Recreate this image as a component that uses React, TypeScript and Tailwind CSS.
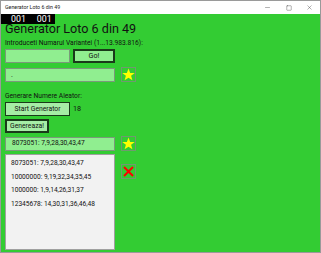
import { Minus, Square, X } from 'lucide-react';

const FONT = { fontFamily: 'Roboto, "Open Sans", sans-serif' };

const LIST = [
  '8073051: 7,9,28,30,43,47',
  '10000000: 9,19,32,34,35,45',
  '1000000: 1,9,14,26,31,37',
  '12345678: 14,30,31,36,46,48',
];

function Star() {
  return (
    <div className="w-[15px] h-[15px] border border-[#6f9a6f] flex items-center justify-center">
      <svg width="13" height="13" viewBox="0 0 24 24">
        <polygon points="12,1 15,9 23.5,9.2 16.8,14.4 19.2,22.8 12,17.8 4.8,22.8 7.2,14.4 0.5,9.2 9,9" fill="#ffff00" />
      </svg>
    </div>
  );
}

function Cross() {
  return (
    <div className="w-[15px] h-[15px] border border-[#6f9a6f] flex items-center justify-center">
      <svg width="11" height="11" viewBox="0 0 11 11">
        <path d="M1 1 L10 10 M10 1 L1 10" stroke="#ff0000" strokeWidth="2" />
      </svg>
    </div>
  );
}

export default function App() {
  return (
    <div className="w-[321px] h-[253px] flex flex-col bg-white border border-[#9a9a9a] overflow-hidden text-[#111]" style={FONT}>
      {/* title bar */}
      <div className="h-[13px] flex items-center pl-[4px] text-[5.3px] text-[#222]">
        <span className="flex-1">Generator Loto 6 din 49</span>
        <div className="flex items-center">
          <div className="w-[21px] flex justify-center"><Minus size={7} strokeWidth={1.2} /></div>
          <div className="w-[21px] flex justify-center"><Square size={6} strokeWidth={1.4} /></div>
          <div className="w-[21px] flex justify-center"><X size={7} strokeWidth={1.2} /></div>
        </div>
      </div>

      {/* content */}
      <div className="relative flex-1 bg-[#33cc33] pl-[4px] flex flex-col">
        <div className="absolute left-0 top-0 w-[54px] h-[10px] bg-black text-white text-[8.8px] leading-[10px] flex gap-[11px] pl-[10px]">
          <span>001</span>
          <span>001</span>
        </div>

        <h1 className="mt-[6px] h-[17px] text-[12.6px] leading-[17px]">Generator Loto 6 din 49</h1>

        <div className="mt-[1px] h-[10px] text-[6.7px] leading-[10px]">Introduceti Numarul Variantei (1...13.983.816):</div>

        <div className="mt-[1px] flex gap-[3px]">
          <div className="w-[65px] h-[14px] bg-[#90ee90] border border-[#7a9a7a]" />
          <div className="w-[42px] h-[14px] bg-[#90ee90] border-2 border-[#1a3a1a] text-[7.2px] flex items-center justify-center">Go!</div>
        </div>

        <div className="mt-[4px] flex items-center gap-[6px]">
          <div className="w-[110px] h-[14px] bg-[#90ee90] border border-[#7a9a7a] text-[7px] leading-[12px] pl-[5px]">.</div>
          <Star />
        </div>

        <div className="mt-[9px] h-[10px] text-[6.7px] leading-[10px]">Generare Numere Aleator:</div>

        <div className="mt-[1px] flex items-center gap-[3px]">
          <div className="w-[65px] h-[14px] bg-[#a6eda6] border border-[#1a3a1a] text-[6.8px] flex items-center justify-center">Start Generator</div>
          <span className="text-[7.2px]">18</span>
        </div>

        <div className="mt-[3px] w-[44px] h-[14px] bg-[#a6eda6] border-2 border-[#1a3a1a] text-[6.8px] flex items-center justify-center">Genereaza!</div>

        <div className="mt-[3px] flex items-center gap-[6px]">
          <div className="w-[110px] h-[14px] bg-[#90ee90] border border-[#7a9a7a] text-[6.6px] flex items-center pl-[6px]">8073051: 7,9,28,30,43,47</div>
          <Star />
        </div>

        <div className="mt-[3px] flex gap-[6px]">
          <div className="w-[110px] h-[96px] bg-[#f2f2f2] border border-[#a0a0a0] pt-[2px] pl-[5px] text-[6.6px] text-[#111]">
            {LIST.map((s) => (
              <div key={s} className="h-[13.5px] leading-[13.5px]">{s}</div>
            ))}
          </div>
          <div className="mt-[10px]"><Cross /></div>
        </div>
      </div>
    </div>
  );
}
